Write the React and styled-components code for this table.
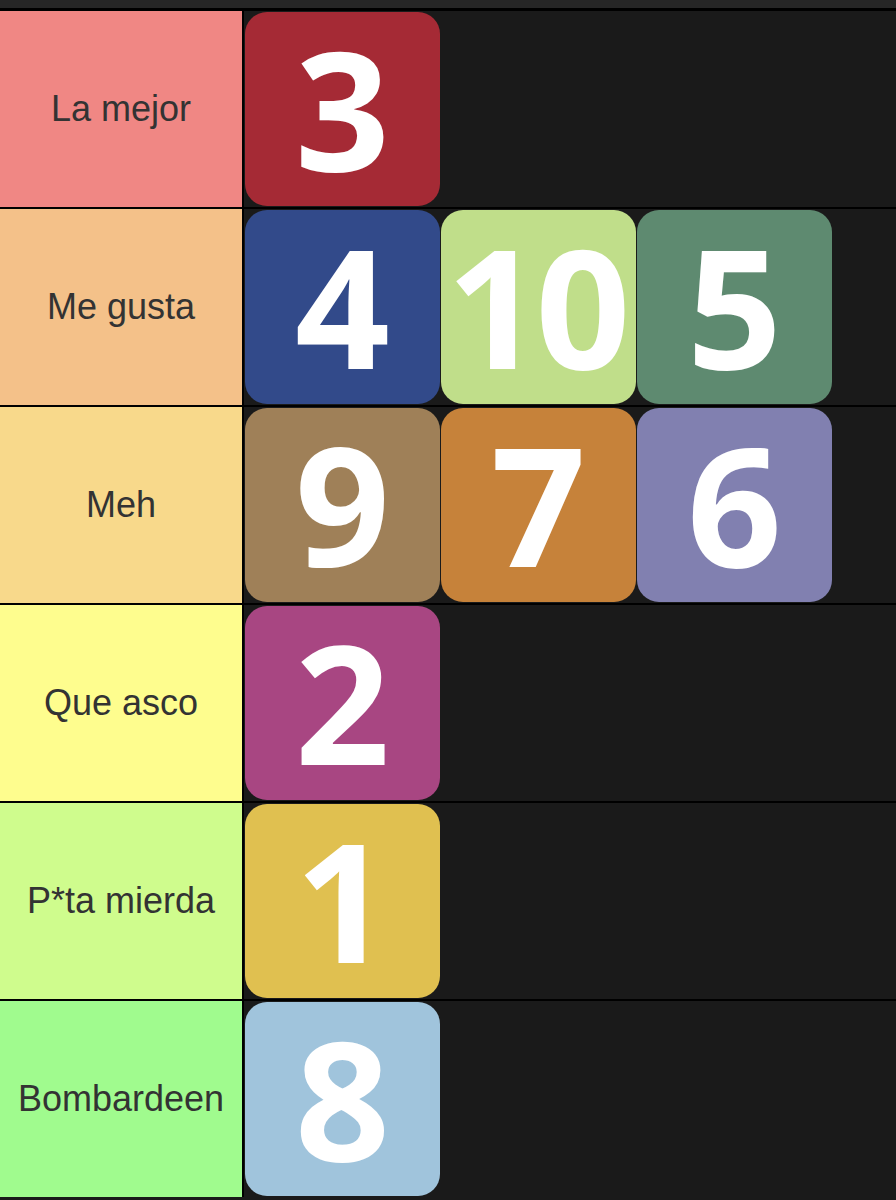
import React from 'react';
import styled, { createGlobalStyle } from 'styled-components';

const GlobalStyle = createGlobalStyle`
    html, body {
        margin: 0;
        padding: 0;
        background: #1a1a1a;
    }
`;

const tiers = [
    { label: 'La mejor', color: '#f08784', items: [{ n: '3', bg: '#a52a35' }] },
    {
        label: 'Me gusta',
        color: '#f4c189',
        items: [
            { n: '4', bg: '#324a8a' },
            { n: '10', bg: '#c0de8a' },
            { n: '5', bg: '#5e8a70' },
        ],
    },
    {
        label: 'Meh',
        color: '#f8d98b',
        items: [
            { n: '9', bg: '#9f8058' },
            { n: '7', bg: '#c6823a' },
            { n: '6', bg: '#8180b0' },
        ],
    },
    { label: 'Que asco', color: '#fefd8e', items: [{ n: '2', bg: '#a84682' }] },
    { label: 'P*ta mierda', color: '#cffc8d', items: [{ n: '1', bg: '#e0c050' }] },
    { label: 'Bombardeen', color: '#a0fb8e', items: [{ n: '8', bg: '#a0c4dc' }] },
];

const App = () => {
    return (
        <Board>
            <GlobalStyle />
            <TopBar />
            {tiers.map((tier) => (
                <Row key={tier.label}>
                    <Label color={tier.color}>{tier.label}</Label>
                    <Items>
                        {tier.items.map((item) => (
                            <Tile key={item.n} bg={item.bg}>
                                <Digits $wide={item.n.length > 1}>{item.n}</Digits>
                            </Tile>
                        ))}
                    </Items>
                </Row>
            ))}
        </Board>
    );
};

const Board = styled.div`
    width: 896px;
    height: 1200px;
    display: flex;
    flex-direction: column;
    background: #1a1a1a;
    overflow: hidden;
`;

const TopBar = styled.div`
    height: 8px;
    background: #262626;
    border-bottom: 1px solid #000;
`;

const Row = styled.div`
    display: flex;
    height: 196px;
    border-top: 2px solid #000;
`;

const Label = styled.div`
    width: 242px;
    flex-shrink: 0;
    display: flex;
    align-items: center;
    justify-content: center;
    background: ${(p) => p.color};
    border-right: 2px solid #000;
    color: #333;
    font-family: 'Liberation Sans', Arial, sans-serif;
    font-size: 36px;
`;

const Items = styled.div`
    flex: 1;
    display: flex;
    gap: 1px;
    padding: 1px;
    background: #1a1a1a;
`;

const Tile = styled.div`
    width: 195px;
    height: 194px;
    box-sizing: border-box;
    padding-bottom: 4px;
    border-radius: 22px;
    background: ${(p) => p.bg};
    display: flex;
    align-items: center;
    justify-content: center;
`;

const Digits = styled.span`
    color: #fff;
    font-family: 'Open Sans', sans-serif;
    font-weight: 700;
    font-size: 166px;
    line-height: 140px;
    letter-spacing: ${(p) => (p.$wide ? '-6px' : '0')};
    margin-left: ${(p) => (p.$wide ? '-6px' : '0')};
`;

export default App;
